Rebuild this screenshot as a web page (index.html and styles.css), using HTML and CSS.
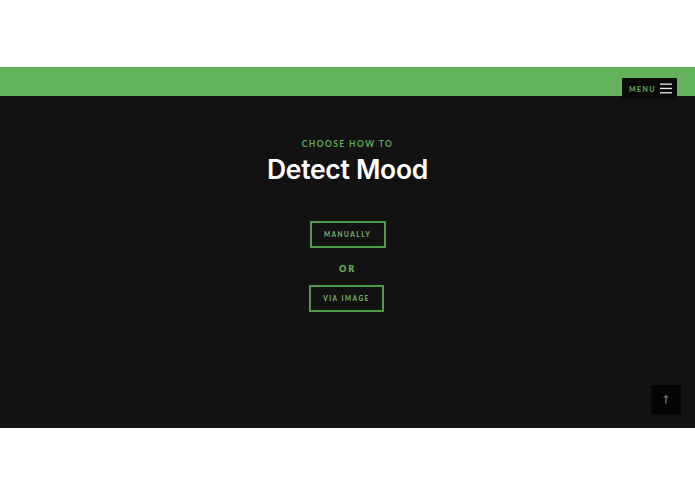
FILE: index.html
```html
<!DOCTYPE html>
<html>
<head>
<meta charset="utf-8">
<link rel="stylesheet" href="styles.css">
</head>
<body>
<div class="top-space"></div>
<header class="bar">
  <button class="menu-btn"><span class="menu-text">MENU</span>
    <svg class="burger" width="12" height="11" viewBox="0 0 12 11"><rect x="0" y="0.5" width="12" height="1.3" fill="#e8e8e8"/><rect x="0" y="4.8" width="12" height="1.3" fill="#e8e8e8"/><rect x="0" y="9.1" width="12" height="1.3" fill="#e8e8e8"/></svg>
  </button>
</header>
<main class="hero">
  <p class="eyebrow">CHOOSE HOW TO</p>
  <h1 class="title">Detect Mood</h1>
  <div class="choices">
    <a class="choice manual">MANUALLY</a>
    <span class="or">OR</span>
    <a class="choice image">VIA IMAGE</a>
  </div>
  <button class="to-top"><svg width="6" height="9" viewBox="0 0 6 9"><path d="M3 0.5 L3 8.5 M0.8 2.8 L3 0.5 L5.2 2.8" stroke="#9a9a9a" stroke-width="1" fill="none"/></svg></button>
</main>
</body>
</html>
```
FILE: styles.css
```css
* { box-sizing: border-box; }
html, body { margin: 0; padding: 0; background: #ffffff; }
body { font-family: "Inter", "Lato", "Liberation Sans", sans-serif; }
.top-space { height: 67px; }
.bar {
  height: 29px;
  background: #62b25b;
  position: relative;
}
.menu-btn {
  position: absolute;
  right: 18px;
  top: 11px;
  width: 55px;
  height: 21px;
  background: #0a0a0a;
  border: 0;
  display: flex;
  align-items: center;
  justify-content: space-between;
  padding: 0 5px 0 7px;
  cursor: pointer;
  z-index: 2;
}
.menu-text {
  color: #5fae57;
  font-family: "Lato", "Liberation Sans", sans-serif;
  font-weight: 700;
  font-size: 7px;
  letter-spacing: 1.4px;
}
.burger { display: block; }
.hero {
  position: relative;
  height: 332px;
  background: #121212;
  display: flex;
  flex-direction: column;
  align-items: center;
  padding-top: 43px;
}
.eyebrow {
  margin: 0;
  color: #5fae57;
  font-family: "Lato", "Liberation Sans", sans-serif;
  font-weight: 700;
  font-size: 8.5px;
  letter-spacing: 1.4px;
  line-height: 10px;
}
.title {
  margin: 5px 0 0;
  color: #ffffff;
  font-weight: 600;
  font-size: 26.5px;
  letter-spacing: -0.3px;
  line-height: 30px;
}
.choices {
  margin-top: 37px;
  display: flex;
  flex-direction: column;
  align-items: center;
}
.choice {
  display: flex;
  align-items: center;
  justify-content: center;
  height: 27px;
  padding: 0;
  border: 2px solid #4e9a48;
  color: #78b872;
  font-family: "Lato", "Liberation Sans", sans-serif;
  font-weight: 700;
  font-size: 6.5px;
  letter-spacing: 1.5px;
  white-space: nowrap;
}
.manual { width: 76px; }
.image { width: 75px; margin-left: -2px; }
.or {
  margin: 16px 0 11px;
  color: #5fae57;
  font-family: "Lato", "Liberation Sans", sans-serif;
  font-weight: 800;
  font-size: 9px;
  letter-spacing: 2px;
  line-height: 10px;
}
.to-top {
  position: absolute;
  right: 14px;
  bottom: 14px;
  width: 30px;
  height: 29px;
  background: #050505;
  border: 0;
  display: flex;
  align-items: center;
  justify-content: center;
  padding: 0;
}
```
